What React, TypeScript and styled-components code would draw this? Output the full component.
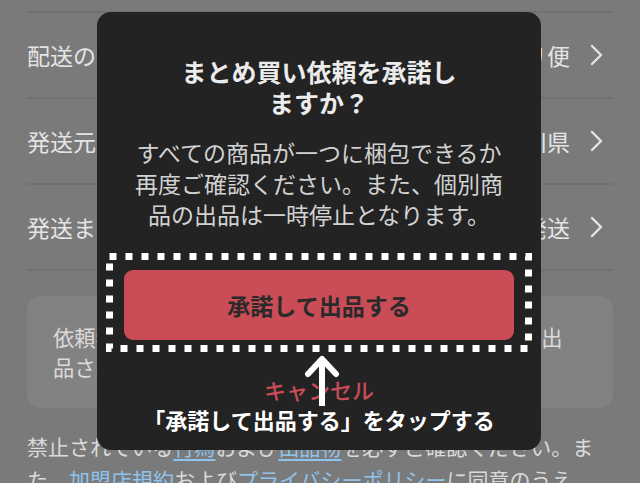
import React from "react";
import styled, { createGlobalStyle } from "styled-components";

const GlobalStyle = createGlobalStyle`
  html, body {
    margin: 0;
    padding: 0;
    background: #7a7a7a;
  }
  body {
    width: 640px;
    height: 483px;
    overflow: hidden;
    font-family: "Noto Sans CJK JP", "Noto Sans", sans-serif;
  }
`;

interface RowData {
  label: string;
  value: string;
}

const rows: RowData[] = [
  { label: "配送の方法", value: "らくらくメルカリ便" },
  { label: "発送元の地域", value: "神奈川県" },
  { label: "発送までの日数", value: "2~3日で発送" },
];

const Chevron = () => (
  <svg width="13" height="22" viewBox="0 0 13 22">
    <path d="M2 2 L11 11 L2 20" fill="none" stroke="#e4e4e4" strokeWidth="2.4" strokeLinecap="round" strokeLinejoin="round" />
  </svg>
);

const App = () => {
  return (
    <>
      <GlobalStyle />
      <Page>
        <List>
          {rows.map((r) => (
            <Row key={r.label}>
              <RowLabel>{r.label}</RowLabel>
              <RowValue>{r.value}</RowValue>
              <Chevron />
            </Row>
          ))}
        </List>
        <NoteCard>
          依頼者が購入手続きするまで、この商品は停止して出<br />
          品されません。
        </NoteCard>
        <Terms>
          禁止されている<TermLink>行為</TermLink>および<TermLink>出品物</TermLink>を必ずご確認ください。また、
          <TermLink>加盟店規約</TermLink>および<TermLink>プライバシーポリシー</TermLink>に同意のうえ、出品してください。
        </Terms>
      </Page>

      <Dialog>
        <Title>まとめ買い依頼を承諾しますか？</Title>
        <Message>すべての商品が一つに梱包できるか再度ご確認ください。また、個別商品の出品は一時停止となります。</Message>
        <ButtonWrap>
          <PrimaryButton>承諾して出品する</PrimaryButton>
          <DottedFrame width="426" height="99" viewBox="0 0 426 99">
            <rect x="3.5" y="3.5" width="419" height="92" fill="none" stroke="#ffffff" strokeWidth="7" strokeDasharray="7 9" />
          </DottedFrame>
          <PointerArrow width="36" height="54" viewBox="0 0 36 54">
            <path d="M18 5 L18 52" stroke="#ffffff" strokeWidth="6" fill="none" />
            <path d="M4 20 L18 5 L32 20" stroke="#ffffff" strokeWidth="6" fill="none" strokeLinecap="round" strokeLinejoin="round" />
          </PointerArrow>
        </ButtonWrap>
        <CancelText>キャンセル</CancelText>
        <Caption>「承諾して出品する」をタップする</Caption>
      </Dialog>
    </>
  );
};

const Page = styled.div`
  padding: 11px 27px 0;
  display: flex;
  flex-direction: column;
`;

const List = styled.div`
  display: flex;
  flex-direction: column;
  border-bottom: 2px solid #717171;
`;

const Row = styled.div`
  height: 84px;
  border-top: 2px solid #717171;
  display: flex;
  align-items: center;
  gap: 20px;
  padding-right: 10px;
  color: #e4e4e4;
  font-size: 23px;
`;

const RowLabel = styled.div`
  flex: 1;
`;

const RowValue = styled.div`
  text-align: right;
`;

const NoteCard = styled.div`
  margin-top: 25px;
  height: 112px;
  box-sizing: border-box;
  border-radius: 14px;
  background: #828282;
  padding: 0 26px;
  display: flex;
  flex-direction: column;
  justify-content: center;
  font-size: 21.3px;
  line-height: 30px;
  color: #dadada;
  white-space: nowrap;
  overflow: hidden;
`;

const Terms = styled.p`
  margin: 22px 0 0;
  font-size: 21px;
  line-height: 33px;
  color: #dadada;
`;

const TermLink = styled.span`
  color: #8ec4ee;
  text-decoration: underline;
  text-underline-offset: 4px;
`;

const Dialog = styled.div`
  position: fixed;
  top: 12px;
  left: 97px;
  width: 444px;
  box-sizing: border-box;
  background: #232323;
  border-radius: 14px;
  padding: 44px 27px 15px;
  display: flex;
  flex-direction: column;
  align-items: center;
  text-align: center;
`;

const Title = styled.h2`
  margin: 0;
  max-width: 290px;
  font-size: 25px;
  line-height: 31px;
  font-weight: 700;
  color: #ececec;
`;

const Message = styled.p`
  margin: 19px 0 0;
  max-width: 372px;
  font-size: 23px;
  line-height: 31px;
  color: #d2d2d2;
`;

const ButtonWrap = styled.div`
  position: relative;
  margin-top: 40px;
  width: 100%;
`;

const PrimaryButton = styled.button`
  width: 100%;
  height: 70px;
  border: none;
  border-radius: 9px;
  background: #c94c56;
  color: #2a2a2a;
  font-family: "Noto Sans CJK JP", sans-serif;
  font-size: 23px;
  font-weight: 700;
`;

const DottedFrame = styled.svg`
  position: absolute;
  top: -17px;
  left: -18px;
`;

const PointerArrow = styled.svg`
  position: absolute;
  top: 84px;
  left: 180px;
`;

const CancelText = styled.div`
  margin-top: 34px;
  font-size: 22px;
  line-height: 31px;
  font-weight: 500;
  color: #c94c56;
`;

const Caption = styled.div`
  margin-top: -1px;
  font-size: 22px;
  line-height: 31px;
  font-weight: 700;
  color: #ffffff;
`;

export default App;
